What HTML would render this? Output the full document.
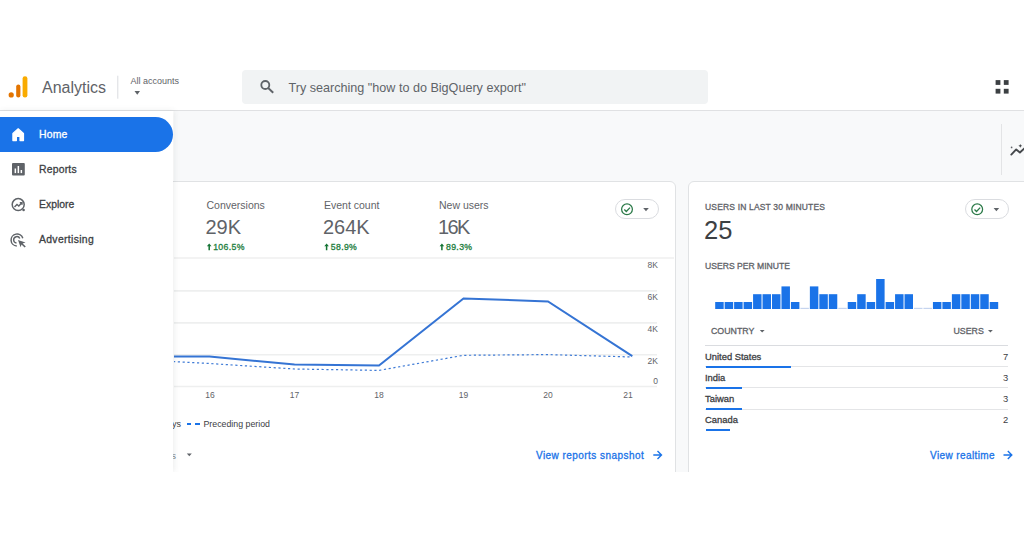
<!DOCTYPE html>
<html><head><meta charset="utf-8">
<style>
*{margin:0;padding:0;box-sizing:border-box}
html,body{width:1024px;height:536px;overflow:hidden;background:#fff}
body{position:relative;font-family:"Liberation Sans",sans-serif;color:#5f6368}
.a{position:absolute;white-space:nowrap;line-height:1}
.b{font-weight:bold}
.m{-webkit-text-stroke:0.3px currentColor;letter-spacing:0.2px}
</style></head><body>

<div style="position:absolute;left:0;top:0;width:1024px;height:472px;overflow:hidden">
<!-- header -->
<svg class="a" style="left:0;top:60px" width="240" height="50" viewBox="0 60 240 50">
  <circle cx="11.2" cy="94.9" r="2.6" fill="#e37400"/>
  <rect x="16.2" y="84.4" width="4.2" height="13.2" rx="2.1" fill="#e37400"/>
  <rect x="22.6" y="76.2" width="4.8" height="21.4" rx="2.4" fill="#f9ab00"/>
  <rect x="117.3" y="75.7" width="1" height="23" fill="#dadce0"/>
  <path d="M134.5 91 L140 91 L137.25 94.8 Z" fill="#5f6368"/>
</svg>
<div class="a" id="t-analytics" style="left:42px;top:80px;font-size:16px;color:#5f6368">Analytics</div>
<div class="a" id="t-allacc" style="left:130.5px;top:77px;font-size:9px;color:#5f6368">All accounts</div>

<div class="a" style="left:242px;top:70px;width:466px;height:34px;background:#f1f3f4;border-radius:4px"></div>
<svg class="a" style="left:256px;top:76px" width="22" height="22" viewBox="256 76 22 22">
  <circle cx="265.3" cy="85" r="4" fill="none" stroke="#5f6368" stroke-width="1.8"/>
  <path d="M268.2 88 L273.2 92.8" stroke="#5f6368" stroke-width="1.9"/>
</svg>
<div class="a" id="t-search" style="left:288.5px;top:82px;font-size:12.6px;color:#5f6368">Try searching "how to do BigQuery export"</div>

<svg class="a" style="left:990px;top:76px" width="24" height="22" viewBox="990 76 24 22">
  <rect x="995.6" y="80.1" width="4.8" height="4.8" fill="#3c4043"/>
  <rect x="1003.8" y="80.1" width="4.8" height="4.8" fill="#3c4043"/>
  <rect x="995.6" y="88.8" width="4.8" height="4.8" fill="#3c4043"/>
  <rect x="1003.8" y="88.8" width="4.8" height="4.8" fill="#3c4043"/>
</svg>
<div class="a" style="left:0;top:110px;width:1024px;height:1px;background:#e0e1e3"></div>

<!-- main gray -->
<div class="a" style="left:174px;top:111px;width:850px;height:361px;background:#f8f9fa"></div>
<div class="a" style="left:1001px;top:124px;width:1px;height:51px;background:#e3e4e6"></div>
<svg class="a" style="left:1006px;top:138px" width="18" height="22" viewBox="1006 138 18 22">
  <path d="M1011.3 154.6 L1016.2 149.4 L1019.9 152.5 L1025 147.8" fill="none" stroke="#45484c" stroke-width="1.9" stroke-linecap="round" stroke-linejoin="round"/>
  <circle cx="1011.6" cy="147.4" r="0.85" fill="#5f6368"/>
  <path d="M1020.3 143.9 l0.6 1.3 1.3 0.6 -1.3 0.6 -0.6 1.3 -0.6 -1.3 -1.3 -0.6 1.3 -0.6z" fill="#45484c"/>
</svg>

<!-- left card -->
<div class="a" style="left:-20px;top:181px;width:696px;height:320px;background:#fff;border:1px solid #e0e2e4;border-radius:6px"></div>
<div class="a" id="t-conv" style="left:206.5px;top:199.5px;font-size:10.5px">Conversions</div>
<div class="a" style="left:324px;top:199.5px;font-size:10.5px">Event count</div>
<div class="a" style="left:439px;top:199.5px;font-size:10.5px">New users</div>
<div class="a" id="t-29k" style="left:205.5px;top:217px;font-size:20px;color:#5f6368">29K</div>
<div class="a" style="left:323px;top:217px;font-size:20px;color:#5f6368">264K</div>
<div class="a" style="left:438px;top:217px;font-size:20px;color:#5f6368;letter-spacing:-1.6px">16K</div>
<svg class="a" style="left:200px;top:240px" width="300" height="14" viewBox="200 240 300 14">
  <g fill="#137333">
  <path d="M209.2 243.6 l2.3 2.6 h-1.55 v4 h-1.5 v-4 h-1.55z"/>
  <path d="M326.6 243.6 l2.3 2.6 h-1.55 v4 h-1.5 v-4 h-1.55z"/>
  <path d="M441.9 243.6 l2.3 2.6 h-1.55 v4 h-1.5 v-4 h-1.55z"/>
  </g>
</svg>
<div class="a m" id="t-pct" style="left:213.2px;top:243.2px;font-size:8.7px;color:#1e7e3e;letter-spacing:0.35px">106.5%</div>
<div class="a m" style="left:330.8px;top:243.2px;font-size:8.7px;color:#1e7e3e;letter-spacing:0.35px">58.9%</div>
<div class="a m" style="left:446px;top:243.2px;font-size:8.7px;color:#1e7e3e;letter-spacing:0.35px">89.3%</div>

<div class="a" style="left:614.5px;top:199.2px;width:44px;height:20.2px;border:1px solid #dadce0;border-radius:10px"></div>
<svg class="a" style="left:614px;top:199px" width="46" height="22" viewBox="614 199 46 22">
  <circle cx="627" cy="209.3" r="5.4" fill="none" stroke="#2b7a48" stroke-width="1.25"/>
  <path d="M624.3 209.5 L626.3 211.5 L630 207.6" fill="none" stroke="#2b7a48" stroke-width="1.3"/>
  <path d="M643.2 208 L648.8 208 L646 211.2 Z" fill="#5f6368"/>
</svg>

<svg class="a" style="left:174px;top:250px" width="500" height="160" viewBox="174 250 500 160">
  <g stroke="#eeefef" stroke-width="1.6">
    <line x1="174" y1="258" x2="676" y2="258" stroke="#f3f3f3" stroke-width="2.2"/>
    <line x1="174" y1="290.9" x2="657" y2="290.9"/>
    <line x1="174" y1="322.9" x2="657" y2="322.9"/>
    <line x1="174" y1="354.7" x2="657" y2="354.7"/>
    <line x1="174" y1="386.5" x2="657" y2="386.5"/>
  </g>
  <polyline points="173,356.5 209.5,356.5 294.5,364.6 379,365.5 463.5,298.4 548,301.4 632.3,356.2" fill="none" stroke="#3574d4" stroke-width="2"/>
  <polyline points="173,361.6 209.5,363.5 294.5,369 379,370.4 463.5,355.3 548,354.6 632.3,357" fill="none" stroke="#3f7bd6" stroke-width="1.2" stroke-dasharray="2.2 2.6"/>
  <g fill="#5f6368" font-family="Liberation Sans" font-size="8.5" text-anchor="end">
    <text x="658" y="267.7">8K</text>
    <text x="658" y="300">6K</text>
    <text x="658" y="332">4K</text>
    <text x="658" y="363.8">2K</text>
    <text x="658" y="383.6">0</text>
  </g>
  <g fill="#5f6368" font-family="Liberation Sans" font-size="8.5" text-anchor="middle">
    <text x="210" y="398.2">16</text>
    <text x="294.5" y="398.2">17</text>
    <text x="379" y="398.2">18</text>
    <text x="463.5" y="398.2">19</text>
    <text x="548" y="398.2">20</text>
    <text x="628" y="398.2">21</text>
  </g>
</svg>
<div class="a" style="left:172px;top:420px;font-size:9px;color:#3c4043">ys</div>
<div class="a" style="left:186.8px;top:422.6px;width:4.5px;height:2px;background:#1a73e8"></div>
<div class="a" style="left:194.8px;top:422.6px;width:4.8px;height:2px;background:#1a73e8"></div>
<div class="a" id="t-prec" style="left:203.5px;top:420px;font-size:8.8px;color:#3c4043">Preceding period</div>
<div class="a" style="left:171.3px;top:450.5px;font-size:9.5px;color:#80868b">s</div>
<svg class="a" style="left:184px;top:450px" width="10" height="8" viewBox="184 450 10 8">
  <path d="M186.8 453.6 L191.8 453.6 L189.3 456.2 Z" fill="#5f6368"/>
</svg>
<div class="a m" id="t-vrs" style="left:536px;top:451.3px;font-size:10px;color:#1a73e8;letter-spacing:0.45px">View reports snapshot</div>
<svg class="a" style="left:650px;top:448px" width="16" height="14" viewBox="650 448 16 14">
  <path d="M653.3 455 H661.5 M657.5 451 L661.5 455 L657.5 459" fill="none" stroke="#1a73e8" stroke-width="1.4"/>
</svg>

<!-- right card -->
<div class="a" style="left:688px;top:181px;width:400px;height:320px;background:#fff;border:1px solid #e0e2e4;border-radius:6px"></div>
<div class="a m" id="t-u30" style="left:705px;top:202.6px;font-size:8.5px;color:#5f6368;letter-spacing:0.17px">USERS IN LAST 30 MINUTES</div>
<div class="a" id="t-25" style="left:704px;top:218px;font-size:25.5px;color:#3c4043">25</div>
<div class="a m" style="left:705px;top:261.6px;font-size:8.6px;color:#5f6368;letter-spacing:0">USERS PER MINUTE</div>
<div class="a" style="left:964.8px;top:199.2px;width:44px;height:20.2px;border:1px solid #dadce0;border-radius:10px"></div>
<svg class="a" style="left:964px;top:199px" width="46" height="22" viewBox="964 199 46 22">
  <circle cx="977.2" cy="209.3" r="5.4" fill="none" stroke="#2b7a48" stroke-width="1.25"/>
  <path d="M974.5 209.5 L976.5 211.5 L980.2 207.6" fill="none" stroke="#2b7a48" stroke-width="1.3"/>
  <path d="M993.6 208 L999.2 208 L996.4 211.2 Z" fill="#5f6368"/>
</svg>
<svg class="a" id="bars" style="left:700px;top:270px" width="310" height="45" viewBox="700 270 310 45"><rect x="715.20" y="302.00" width="8.47" height="7.00" fill="#1a73e8"/><rect x="724.67" y="302.00" width="8.47" height="7.00" fill="#1a73e8"/><rect x="734.13" y="302.00" width="8.47" height="7.00" fill="#1a73e8"/><rect x="743.60" y="302.00" width="8.47" height="7.00" fill="#1a73e8"/><rect x="753.07" y="294.20" width="8.47" height="14.80" fill="#1a73e8"/><rect x="762.53" y="294.20" width="8.47" height="14.80" fill="#1a73e8"/><rect x="772.00" y="294.20" width="8.47" height="14.80" fill="#1a73e8"/><rect x="781.47" y="286.40" width="8.47" height="22.60" fill="#1a73e8"/><rect x="790.93" y="302.00" width="8.47" height="7.00" fill="#1a73e8"/><rect x="800.40" y="307.80" width="8.47" height="1.20" fill="#c5d4ef"/><rect x="809.87" y="286.40" width="8.47" height="22.60" fill="#1a73e8"/><rect x="819.33" y="294.20" width="8.47" height="14.80" fill="#1a73e8"/><rect x="828.80" y="294.20" width="8.47" height="14.80" fill="#1a73e8"/><rect x="838.27" y="307.80" width="8.47" height="1.20" fill="#c5d4ef"/><rect x="847.73" y="302.00" width="8.47" height="7.00" fill="#1a73e8"/><rect x="857.20" y="294.20" width="8.47" height="14.80" fill="#1a73e8"/><rect x="866.67" y="302.00" width="8.47" height="7.00" fill="#1a73e8"/><rect x="876.13" y="279.00" width="8.47" height="30.00" fill="#1a73e8"/><rect x="885.60" y="302.00" width="8.47" height="7.00" fill="#1a73e8"/><rect x="895.07" y="294.20" width="8.47" height="14.80" fill="#1a73e8"/><rect x="904.53" y="294.20" width="8.47" height="14.80" fill="#1a73e8"/><rect x="914.00" y="307.80" width="8.47" height="1.20" fill="#c5d4ef"/><rect x="923.47" y="307.80" width="8.47" height="1.20" fill="#c5d4ef"/><rect x="932.93" y="302.00" width="8.47" height="7.00" fill="#1a73e8"/><rect x="942.40" y="302.00" width="8.47" height="7.00" fill="#1a73e8"/><rect x="951.87" y="294.20" width="8.47" height="14.80" fill="#1a73e8"/><rect x="961.33" y="294.20" width="8.47" height="14.80" fill="#1a73e8"/><rect x="970.80" y="294.20" width="8.47" height="14.80" fill="#1a73e8"/><rect x="980.27" y="294.20" width="8.47" height="14.80" fill="#1a73e8"/><rect x="989.73" y="302.00" width="8.47" height="7.00" fill="#1a73e8"/></svg>

<div class="a m" id="t-country" style="left:711px;top:327px;font-size:8.8px;color:#5f6368;letter-spacing:0">COUNTRY</div>
<svg class="a" style="left:755px;top:326px" width="14" height="10" viewBox="755 326 14 10"><path d="M759.8 330 L764.6 330 L762.2 332.5 Z" fill="#5f6368"/></svg>
<div class="a m" style="left:953.5px;top:327px;font-size:8.8px;color:#5f6368;letter-spacing:0">USERS</div>
<svg class="a" style="left:984px;top:326px" width="14" height="10" viewBox="984 326 14 10"><path d="M988 330 L992.8 330 L990.4 332.5 Z" fill="#5f6368"/></svg>
<div class="a" style="left:705px;top:345px;width:303px;height:1px;background:#dadce0"></div>

<div class="a m" id="t-us" style="left:705px;top:351.5px;font-size:9.4px;color:#3c4043;letter-spacing:0">United States</div>
<div class="a m" style="left:705px;top:372.8px;font-size:9.4px;color:#3c4043;letter-spacing:0">India</div>
<div class="a m" style="left:705px;top:393.8px;font-size:9.4px;color:#3c4043;letter-spacing:0">Taiwan</div>
<div class="a m" style="left:705px;top:414.8px;font-size:9.4px;color:#3c4043;letter-spacing:0">Canada</div>
<div class="a" style="left:705px;top:366px;width:303px;height:1px;background:#e4e5e7"></div>
<div class="a" style="left:705px;top:387px;width:303px;height:1px;background:#e4e5e7"></div>
<div class="a" style="left:705px;top:408.5px;width:303px;height:1px;background:#e4e5e7"></div>
<div class="a" style="left:705.5px;top:365.6px;width:85.3px;height:2px;background:#1a73e8"></div>
<div class="a" style="left:705.5px;top:386.6px;width:36.5px;height:2px;background:#1a73e8"></div>
<div class="a" style="left:705.5px;top:408.1px;width:36.5px;height:2px;background:#1a73e8"></div>
<div class="a" style="left:705.5px;top:429.4px;width:24.6px;height:2px;background:#1a73e8"></div>
<svg class="a" style="left:990px;top:345px" width="24" height="90" viewBox="990 345 24 90">
  <g fill="#3c4043" font-family="Liberation Sans" font-size="9.4" text-anchor="end">
    <text x="1008.2" y="359.8">7</text>
    <text x="1008.2" y="381.1">3</text>
    <text x="1008.2" y="402">3</text>
    <text x="1008.2" y="423">2</text>
  </g>
</svg>
<div class="a m" id="t-vrt" style="left:930px;top:450.8px;font-size:10px;color:#1a73e8;letter-spacing:0.4px">View realtime</div>
<svg class="a" style="left:1000px;top:448px" width="16" height="14" viewBox="1000 448 16 14">
  <path d="M1003.5 455 H1011.8 M1007.8 451 L1011.8 455 L1007.8 459" fill="none" stroke="#1a73e8" stroke-width="1.4"/>
</svg>

<!-- nav drawer -->
<div class="a" style="left:0;top:111px;width:173px;height:361px;background:#fff;box-shadow:1px 0 6px rgba(60,64,67,0.10)"></div>
<div class="a" style="left:0;top:116.5px;width:172.8px;height:35px;background:#1a73e8;border-radius:0 17.5px 17.5px 0"></div>
<svg class="a" style="left:8px;top:124px" width="24" height="130" viewBox="8 124 24 130">
  <path d="M18.2 128.8 L12.9 133.4 V140.6 H16.4 V136.3 H20 V140.6 H23.5 V133.4 Z" fill="#fff" stroke="#fff" stroke-width="1.2" stroke-linejoin="round"/>
  <rect x="12" y="163" width="12.8" height="12.4" rx="1" fill="#5f6368"/>
  <rect x="14.6" y="168.5" width="1.5" height="4.6" fill="#fff"/>
  <rect x="17.6" y="166" width="1.5" height="7.1" fill="#fff"/>
  <rect x="20.6" y="170" width="1.5" height="3.1" fill="#fff"/>
  <circle cx="18.2" cy="204.6" r="6" fill="none" stroke="#5f6368" stroke-width="1.5"/>
  <path d="M14.5 207 L17 204.5 L18.8 206 L21.8 202.8 M19.8 202.6 H22 V204.8" fill="none" stroke="#5f6368" stroke-width="1.4"/>
  <circle cx="23.6" cy="210" r="1.3" fill="#5f6368"/>
  <path d="M22.8 238.2 A6 6 0 1 0 16.8 246" fill="none" stroke="#5f6368" stroke-width="1.5"/>
  <path d="M19.8 238.6 A3.2 3.2 0 1 0 16.5 243" fill="none" stroke="#5f6368" stroke-width="1.4"/>
  <path d="M18 240 L25.5 242.5 L22.6 243.4 L25.8 246.5 L24.6 247.6 L21.5 244.5 L20.6 247.3 Z" fill="#5f6368"/>
</svg>
<div class="a m" id="t-home" style="left:39px;top:129.5px;font-size:10.4px;color:#fff">Home</div>
<div class="a m" id="t-reports" style="left:39px;top:165px;font-size:10.4px;color:#3c4043">Reports</div>
<div class="a m" style="left:39px;top:200px;font-size:10.4px;color:#3c4043;letter-spacing:0px">Explore</div>
<div class="a m" style="left:39px;top:234.5px;font-size:10.4px;color:#3c4043;letter-spacing:0.33px">Advertising</div>

</div>
</body></html>
